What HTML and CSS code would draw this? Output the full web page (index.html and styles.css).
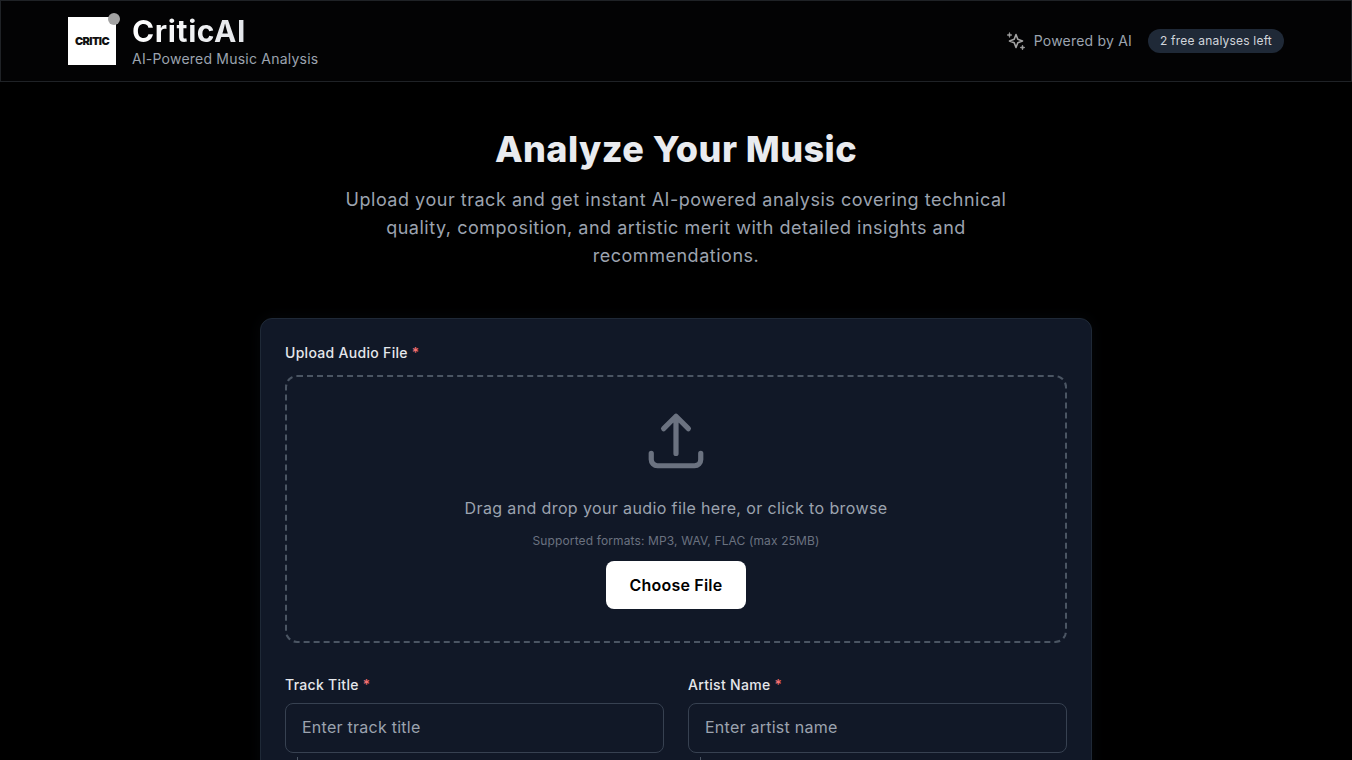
FILE: index.html
```html
<!DOCTYPE html>
<html lang="en">
<head>
  <meta charset="UTF-8">
  <meta name="viewport" content="width=device-width, initial-scale=1.0">
  <title>CriticAI</title>
  <link rel="stylesheet" href="styles.css">
</head>
<body>
  <header class="site-header">
    <div class="brand">
      <div class="logo">
        <span class="logo-text">CRITIC</span>
        <span class="logo-dot"></span>
      </div>
      <div>
        <div class="brand-name">CriticAI</div>
        <div class="brand-tag">AI-Powered Music Analysis</div>
      </div>
    </div>
    <div class="header-right">
      <svg class="sparkle" width="20" height="20" viewBox="0 0 20 20" fill="none" stroke="currentColor" stroke-width="1.6" stroke-linejoin="round">
        <path d="M10 3.500l1.800 4.700 4.700 1.800-4.700 1.800-1.800 4.700-1.800-4.700-4.700-1.800 4.700-1.800z"/>
        <path d="M3.500 1.500l.6 1.900 1.900.6-1.900.6-.6 1.900-.6-1.900-1.900-.6 1.900-.6zM16.500 14l.6 1.900 1.900.6-1.900.6-.6 1.900-.6-1.900-1.900-.6 1.900-.6z" fill="currentColor" stroke-width="0.6"/>
      </svg>
      <span class="powered">Powered by AI</span>
      <span class="badge">2 free analyses left</span>
    </div>
  </header>

  <main class="content">
    <h1>Analyze Your Music</h1>
    <p class="lead">Upload your track and get instant AI-powered analysis covering technical quality, composition, and artistic merit with detailed insights and recommendations.</p>

    <form class="card">
      <label class="field-label">Upload Audio File <span class="req">*</span></label>
      <div class="dropzone">
        <svg class="upload-icon" width="66" height="66" viewBox="0 0 24 24" fill="none" stroke="currentColor" stroke-width="1.9" stroke-linecap="round" stroke-linejoin="round">
          <path d="M3 16.500v2.250A2.250 2.250 0 0 0 5.250 21h13.500A2.250 2.250 0 0 0 21 18.750V16.500"/>
          <path d="M7.500 7.500 12 3l4.500 4.500M12 3v13.500"/>
        </svg>
        <p class="drop-text">Drag and drop your audio file here, or click to browse</p>
        <p class="drop-hint">Supported formats: MP3, WAV, FLAC (max 25MB)</p>
        <button type="button" class="choose-btn">Choose File</button>
      </div>

      <div class="field-row">
        <div>
          <label class="field-label">Track Title <span class="req">*</span></label>
          <input class="text-input" type="text" placeholder="Enter track title">
          <div class="field-tick"></div>
        </div>
        <div>
          <label class="field-label">Artist Name <span class="req">*</span></label>
          <input class="text-input" type="text" placeholder="Enter artist name">
          <div class="field-tick"></div>
        </div>
      </div>
    </form>
  </main>
</body>
</html>
```

FILE: styles.css
```css
html, body {
  height: 760px;
  overflow: hidden;
}
body {
  margin: 0;
  background: #000;
  color: #f3f4f6;
  font-family: Inter, "Noto Sans", sans-serif;
}
.site-header {
  box-sizing: border-box;
  height: 82px;
  padding: 0 67px;
  display: flex;
  justify-content: space-between;
  align-items: center;
  background: #030304;
  border: 1px solid #1f2226;
}
.brand {
  display: flex;
  align-items: center;
  gap: 16px;
}
.logo {
  position: relative;
  width: 48px;
  height: 48px;
  background: #fff;
  display: flex;
  align-items: center;
  justify-content: center;
}
.logo-text {
  color: #111;
  font-size: 11px;
  font-weight: 900;
  letter-spacing: -0.6px;
}
.logo-dot {
  position: absolute;
  top: -4px;
  right: -4px;
  width: 12px;
  height: 12px;
  border-radius: 50%;
  background: #a3a3a3;
}
.brand-name {
  font-size: 30px;
  line-height: 36px;
  font-weight: 700;
  letter-spacing: 0.6px;
  background: linear-gradient(90deg, #fff, #d1d5db);
  -webkit-background-clip: text;
  background-clip: text;
  color: transparent;
}
.brand-tag {
  font-size: 14px;
  line-height: 20px;
  color: #9ca3af;
  letter-spacing: 0.22px;
}
.header-right {
  display: flex;
  align-items: center;
}
.sparkle {
  color: #a3a3a3;
  margin-right: 8px;
}
.powered {
  font-size: 14px;
  color: #9ca3af;
  margin-right: 16px;
  padding-bottom: 2px;
  letter-spacing: 0.2px;
}
.badge {
  background: #1f2937;
  color: #d1d5db;
  font-size: 12px;
  line-height: 16px;
  padding: 4px 12px;
  border-radius: 999px;
  letter-spacing: 0.2px;
}
.content {
  padding-top: 43px;
  text-align: center;
}
h1 {
  margin: 0 0 13px;
  font-size: 36px;
  line-height: 48px;
  font-weight: 800;
  letter-spacing: 0.45px;
  color: #e9ebef;
}
.lead {
  width: 680px;
  margin: 0 auto 48px;
  font-size: 18px;
  line-height: 28px;
  color: #9ca3af;
  letter-spacing: 0.52px;
}
.card {
  box-sizing: border-box;
  width: 832px;
  margin: 0 auto;
  padding: 24px;
  background: #111827;
  border: 1px solid #1f2937;
  border-radius: 12px;
  box-shadow: 0 0 16px rgba(31, 41, 55, 0.2);
  text-align: left;
}
.field-label {
  display: block;
  font-size: 14px;
  line-height: 20px;
  font-weight: 500;
  letter-spacing: 0.3px;
  color: #e5e7eb;
  margin-bottom: 12px;
}
.req {
  color: #f87171;
}
.dropzone {
  box-sizing: border-box;
  height: 268px;
  padding-top: 31px;
  border: 2px dashed #4b5563;
  border-radius: 12px;
  text-align: center;
}
.upload-icon {
  display: block;
  margin: 0 auto 22px;
  color: #6b7280;
}
.drop-text {
  margin: 0 0 13px;
  font-size: 16px;
  line-height: 24px;
  letter-spacing: 0.38px;
  color: #9ca3af;
}
.drop-hint {
  margin: 0 0 12px;
  font-size: 12px;
  line-height: 16px;
  letter-spacing: 0.13px;
  color: #6b7280;
}
.choose-btn {
  width: 140px;
  height: 48px;
  border: 0;
  border-radius: 8px;
  background: #fff;
  color: #000;
  font-family: inherit;
  font-size: 16px;
  font-weight: 600;
  letter-spacing: 0.2px;
}
.field-row {
  display: grid;
  grid-template-columns: 1fr 1fr;
  gap: 24px;
  margin-top: 32px;
}
.field-row .field-label {
  margin-bottom: 8px;
}
.text-input {
  box-sizing: border-box;
  display: block;
  width: 100%;
  height: 50px;
  padding: 0 16px 2px;
  background: #111827;
  border: 1px solid #374151;
  border-radius: 8px;
  color: #f3f4f6;
  font-family: inherit;
  font-size: 16px;
  letter-spacing: 0.25px;
}
.text-input::placeholder {
  color: #9ca3af;
}
.field-tick {
  width: 1px;
  height: 3px;
  margin: 4px 0 0 12px;
  background: #4b5563;
}
```
